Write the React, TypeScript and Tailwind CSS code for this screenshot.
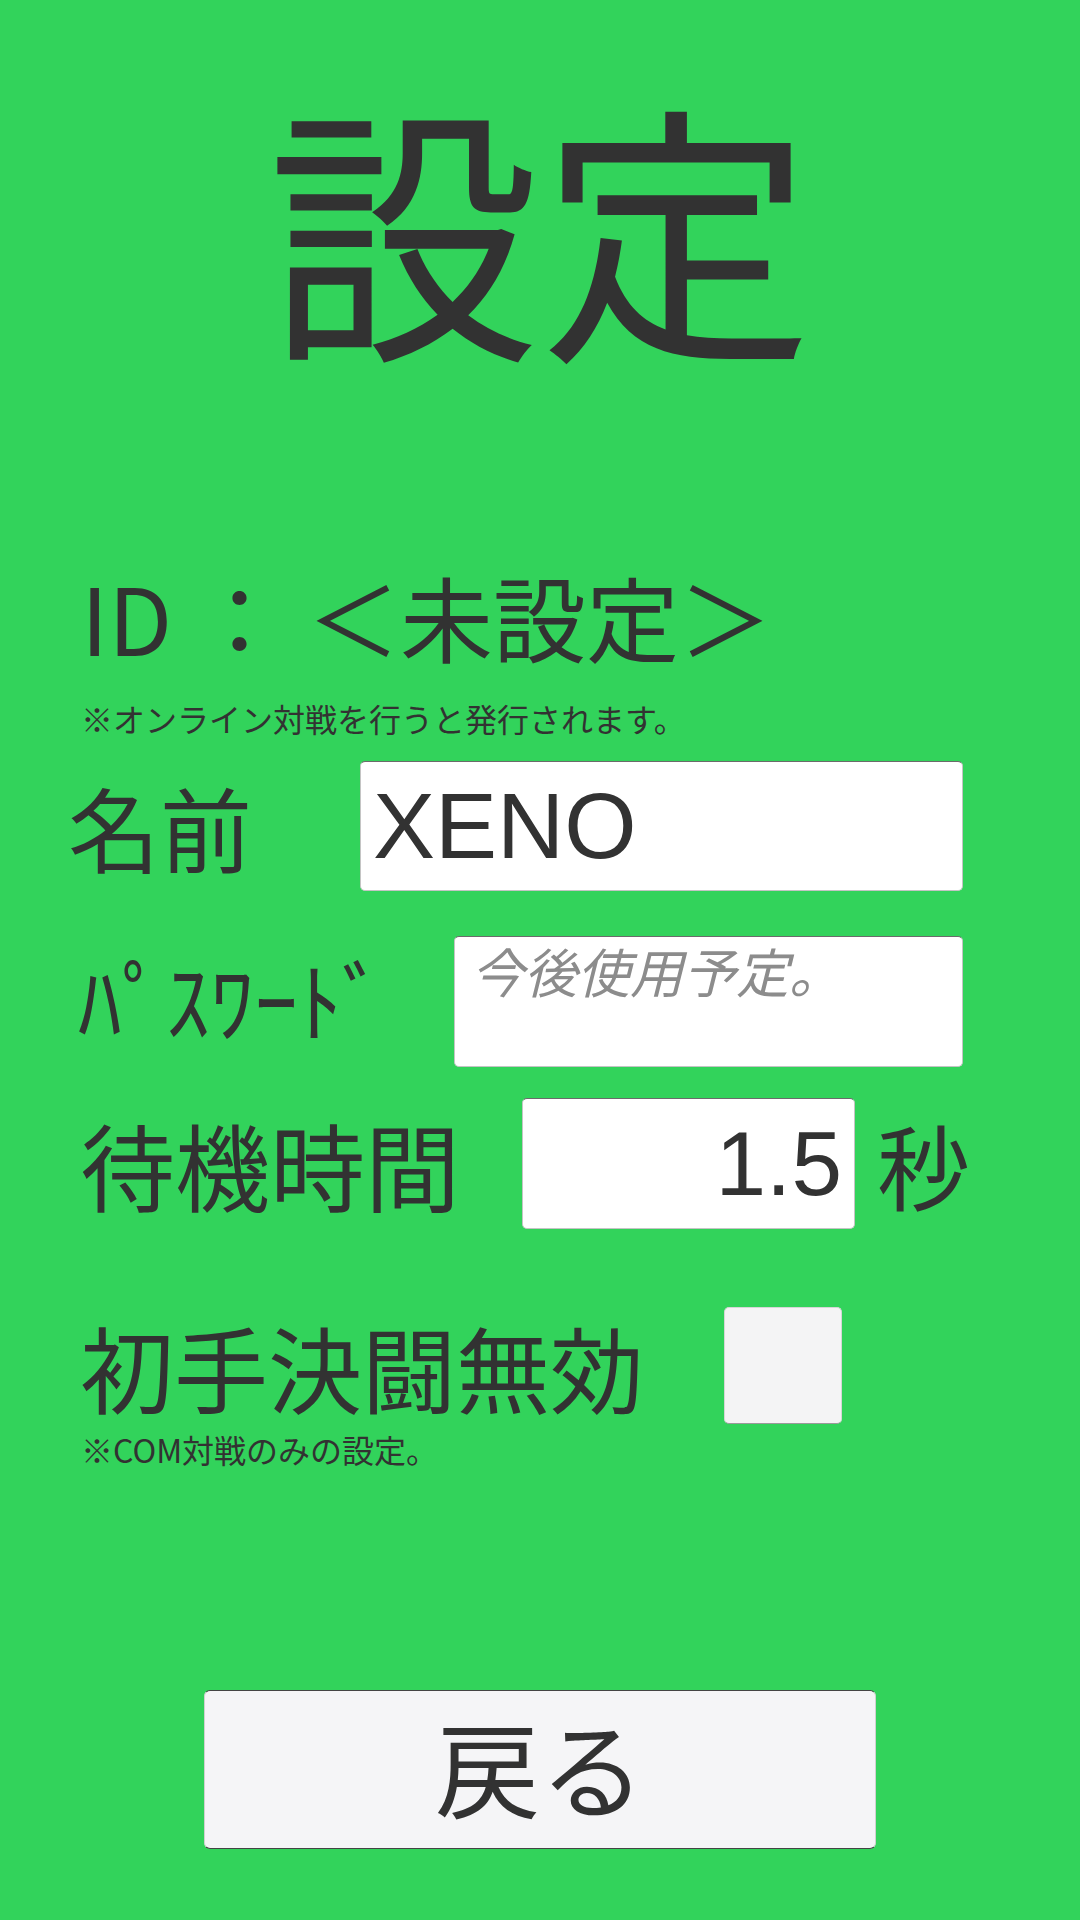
export default function App() {
  const fieldClass =
    "flex rounded-[5px] border border-[#c4c4c4] border-t-[#6b6b6b] bg-white";

  return (
    <div className="min-h-[1920px] w-full bg-[#32d35b] font-['Noto_Sans_CJK_JP',sans-serif] text-[#323232]">
      <h1 className="pt-[86px] text-center text-[273px] font-normal leading-none">
        設定
      </h1>

      <div className="pl-[81px]">
        <p className="mt-[210px] whitespace-pre text-[93px] leading-none">
          ID ： ＜未設定＞
        </p>
        <p className="mt-[40px] text-[32px] leading-none">
          ※オンライン対戦を行うと発行されます。
        </p>
      </div>

      {/* 名前 */}
      <div className="mt-[27px] flex items-center">
        <span className="w-[360px] shrink-0 pl-[68px] text-[92px] leading-none">
          名前
        </span>
        <div
          className={`${fieldClass} h-[130px] w-[603px] items-center pl-[12px] font-['Liberation_Sans',sans-serif] text-[93px] leading-none`}
        >
          XENO
        </div>
      </div>

      {/* パスワード */}
      <div className="mt-[45px] flex items-center">
        <span className="w-[454px] shrink-0 pl-[78px] pb-[10px] text-[88px] leading-none">
          ﾊﾟｽﾜｰﾄﾞ
        </span>
        <div
          className={`${fieldClass} h-[131px] w-[509px] items-start pl-[16px] pt-[7px] text-[53px] italic leading-none text-[#8c8c8c]`}
        >
          今後使用予定。
        </div>
      </div>

      {/* 待機時間 */}
      <div className="mt-[31px] flex items-center">
        <span className="w-[522px] shrink-0 pl-[80px] text-[95px] leading-none">
          待機時間
        </span>
        <div
          className={`${fieldClass} h-[131px] w-[333px] items-center justify-end pr-[12px] font-['Liberation_Sans',sans-serif] text-[91px] leading-none`}
        >
          1.5
        </div>
        <span className="ml-[22px] text-[93px] leading-none">秒</span>
      </div>

      {/* 初手決闘無効 */}
      <div className="mt-[78px] flex items-center">
        <span className="w-[724px] shrink-0 pl-[80px] text-[94px] leading-none">
          初手決闘無効
        </span>
        <div className="h-[117px] w-[118px] rounded-[5px] border border-[#d6d6d6] border-b-[#9a9a9a] bg-[#f4f4f5]" />
      </div>
      <p className="mt-[9px] pl-[81px] text-[32px] leading-none">
        ※COM対戦のみの設定。
      </p>

      <div className="mt-[225px] flex justify-center">
        <button
          type="button"
          className="flex h-[159px] w-[672px] items-center justify-center rounded-[6px] border border-[#d0d0d0] border-y-[#444444] bg-[#f5f5f7] pb-[10px] text-[105px] leading-none text-[#323232]"
        >
          戻る
        </button>
      </div>
    </div>
  );
}
